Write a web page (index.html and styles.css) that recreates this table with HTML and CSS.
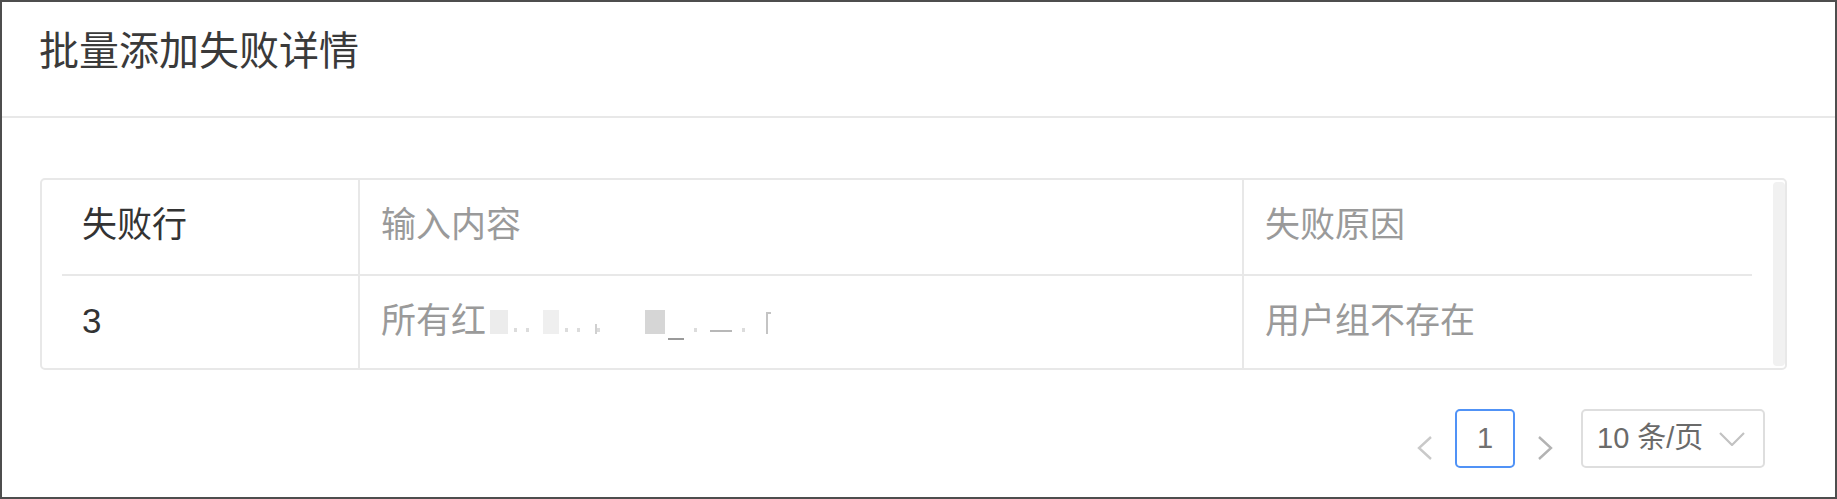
FILE: index.html
```html
<!DOCTYPE html>
<html lang="zh-CN">
<head>
<meta charset="utf-8">
<title>批量添加失败详情</title>
<link rel="stylesheet" href="styles.css">
</head>
<body>
<div class="modal">
  <div class="modal-header">
    <div class="modal-title">批量添加失败详情</div>
  </div>
  <div class="modal-body">
    <div class="table">
      <div class="col col-row">
        <div class="th dark">失败行</div>
        <div class="td dark">3</div>
      </div>
      <div class="col col-input">
        <div class="th">输入内容</div>
        <div class="td">所有红<span class="redact"><span class="blk b1"></span><span class="dot"></span><span class="dot"></span><span class="blk b2"></span><span class="dot"></span><span class="dot"></span><span class="tick"></span><span class="dot"></span><span class="blk b3"></span><span class="under"></span><span class="dot"></span><span class="dash"></span><span class="dot"></span><span class="corner"></span></span></div>
      </div>
      <div class="col col-reason">
        <div class="th">失败原因</div>
        <div class="td">用户组不存在</div>
      </div>
      <div class="scrollbar"></div>
    </div>
    <div class="pagination">
      <div class="pg-arrow">
        <svg width="18" height="26" viewBox="0 0 18 26"><path d="M15 2 L3 13 L15 24" fill="none" stroke="#c9c9c9" stroke-width="2.4"/></svg>
      </div>
      <div class="pg-item">1</div>
      <div class="pg-arrow">
        <svg width="18" height="26" viewBox="0 0 18 26"><path d="M3 2 L15 13 L3 24" fill="none" stroke="#b3b3b3" stroke-width="2.4"/></svg>
      </div>
      <div class="pg-select">
        <span class="pg-select-text">10 条/页</span>
        <svg width="26" height="14" viewBox="0 0 26 14"><path d="M1 1 L13 13 L25 1" fill="none" stroke="#c2c2c2" stroke-width="2.2"/></svg>
      </div>
    </div>
  </div>
</div>
</body>
</html>
```
FILE: styles.css
```css
html, body {
  margin: 0;
  padding: 0;
  background: #ffffff;
}

body {
  font-family: "Liberation Sans", "Noto Sans CJK SC", sans-serif;
}

.modal {
  width: 1837px;
  height: 499px;
  box-sizing: border-box;
  border: 2px solid #4e4e4e;
  background: #ffffff;
  display: flex;
  flex-direction: column;
}

.modal-header {
  height: 116px;
  box-sizing: border-box;
  padding: 22px 0 0 37px;
  border-bottom: 2px solid #e8e8e8;
}

.modal-title {
  font-size: 40px;
  line-height: 54px;
  color: #3a3a3a;
}

.modal-body {
  padding: 60px 48px 0 38px;
}

.table {
  display: flex;
  height: 192px;
  box-sizing: border-box;
  border: 2px solid #e8e8e8;
  border-radius: 5px;
}

.col {
  display: flex;
  flex-direction: column;
}

.col-row {
  width: 318px;
  box-sizing: border-box;
  border-right: 2px solid #e8e8e8;
}

.col-input {
  width: 884px;
  box-sizing: border-box;
  border-right: 2px solid #e8e8e8;
}

.col-reason {
  flex: 1;
}

.th, .td {
  font-size: 35px;
  line-height: 46px;
  color: #9a9a9a;
  box-sizing: border-box;
  padding: 22px 0 0 21px;
  white-space: nowrap;
}

.th {
  height: 96px;
  border-bottom: 2px solid #e8e8e8;
}

.td {
  height: 92px;
}

.col-row .th, .col-row .td {
  margin-left: 20px;
  padding-left: 20px;
}

.col-reason .th {
  margin-right: 21px;
}

.dark {
  color: #333333;
}

.redact {
  display: inline-flex;
  align-items: flex-start;
  height: 46px;
  vertical-align: top;
  margin-left: 4px;
}

.blk {
  display: inline-block;
  width: 18px;
  height: 24px;
  margin-top: 12px;
}

.b1 { background: #ececec; margin-right: 6px; }
.b2 { background: #efefef; width: 16px; margin-left: 5px; margin-right: 6px; }
.b3 { background: #d6d6d6; width: 20px; margin-left: 36px; margin-right: 3px; }

.dot {
  display: inline-block;
  width: 3px;
  height: 4px;
  background: #dcdcdc;
  margin: 30px 9px 0 0;
}

.tick {
  display: inline-block;
  width: 2px;
  height: 10px;
  background: #d0d0d0;
  margin: 26px 0 0 6px;
}

.under {
  display: inline-block;
  width: 16px;
  height: 2px;
  background: #9a9a9a;
  margin: 40px 10px 0 0;
}

.dash {
  display: inline-block;
  width: 22px;
  height: 2px;
  background: #b8b8b8;
  margin: 32px 10px 0 4px;
}

.corner {
  display: inline-block;
  width: 5px;
  height: 22px;
  border-top: 2px solid #c4c4c4;
  border-left: 2px solid #c4c4c4;
  box-sizing: border-box;
  margin: 14px 0 0 12px;
}

.scrollbar {
  width: 12px;
  margin: 2px 0;
  background: #f1f1f1;
  border-radius: 4px;
}

.pagination {
  display: flex;
  justify-content: flex-end;
  align-items: flex-start;
  gap: 11px;
  margin: 39px 22px 0 0;
}

.pg-arrow {
  width: 38px;
  height: 59px;
  box-sizing: border-box;
  padding-top: 26px;
  display: flex;
  justify-content: center;
  align-items: flex-start;
}

.pg-item {
  width: 60px;
  height: 59px;
  box-sizing: border-box;
  border: 2px solid #5092f6;
  border-radius: 5px;
  font-size: 29px;
  line-height: 55px;
  text-align: center;
  color: #707070;
}

.pg-select {
  width: 184px;
  height: 59px;
  box-sizing: border-box;
  margin-left: 6px;
  border: 2px solid #dedede;
  border-radius: 5px;
  display: flex;
  align-items: center;
  justify-content: space-between;
  padding: 0 18px 0 14px;
}

.pg-select-text {
  font-size: 29px;
  line-height: 55px;
  color: #6a6a6a;
  white-space: nowrap;
}
```
